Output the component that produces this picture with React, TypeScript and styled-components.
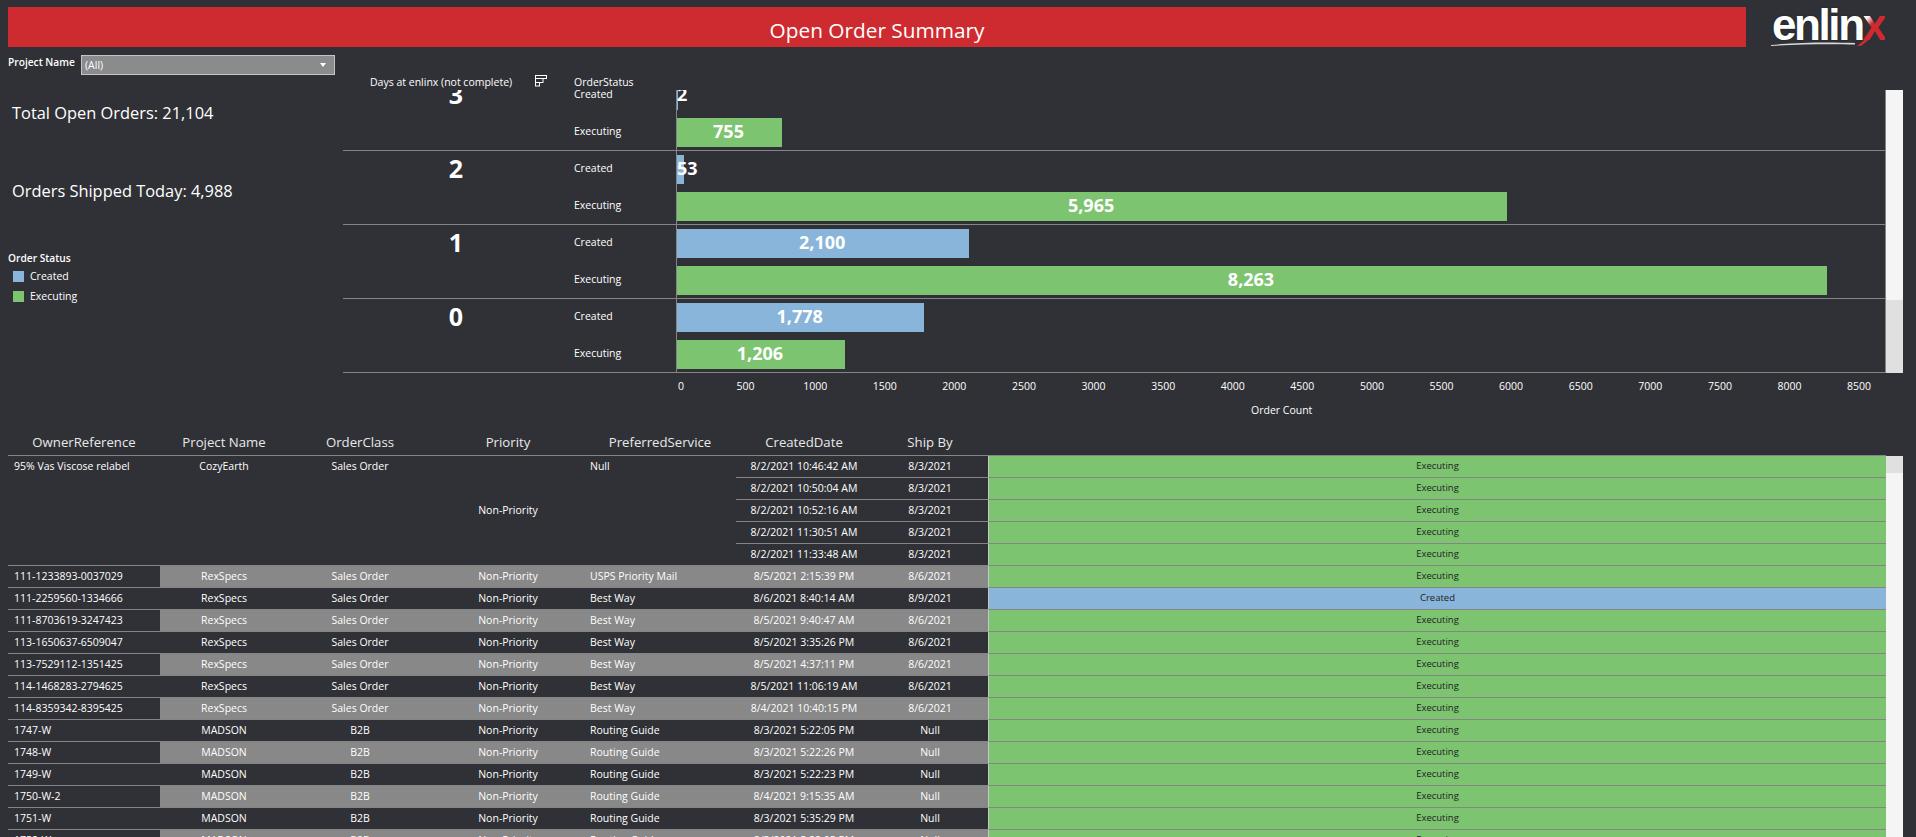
import styled, {createGlobalStyle} from "styled-components";

const GlobalStyle = createGlobalStyle`
  html, body {
    margin: 0;
    padding: 0;
    height: 837px;
    overflow: hidden;
    background: #303136;
  }
  * {
    box-sizing: border-box;
  }
  body {
    font-family: "Open Sans", "Noto Sans", sans-serif;
    color: #fff;
  }
`;

const GREEN = "#7dc470";
const BLUE = "#88b5d9";
const LINE = "#858585";
const PX_PER_ORDER = 1150 / 8263;

type OrderStatus = "Created" | "Executing";

const chartRows: {day: number; created: number; executing: number}[] = [
  {day: 3, created: 2, executing: 755},
  {day: 2, created: 53, executing: 5965},
  {day: 1, created: 2100, executing: 8263},
  {day: 0, created: 1778, executing: 1206},
];

const ticks = [0, 500, 1000, 1500, 2000, 2500, 3000, 3500, 4000, 4500, 5000, 5500, 6000, 6500, 7000, 7500, 8000, 8500];

const columns = ["OwnerReference", "Project Name", "OrderClass", "Priority", "PreferredService", "CreatedDate", "Ship By"];

const cozyDates = [
  ["8/2/2021 10:46:42 AM", "8/3/2021"],
  ["8/2/2021 10:50:04 AM", "8/3/2021"],
  ["8/2/2021 10:52:16 AM", "8/3/2021"],
  ["8/2/2021 11:30:51 AM", "8/3/2021"],
  ["8/2/2021 11:33:48 AM", "8/3/2021"],
];

const orders: {ref: string; project: string; orderClass: string; service: string; created: string; shipBy: string; status: OrderStatus}[] = [
  {ref: "111-1233893-0037029", project: "RexSpecs", orderClass: "Sales Order", service: "USPS Priority Mail", created: "8/5/2021 2:15:39 PM", shipBy: "8/6/2021", status: "Executing"},
  {ref: "111-2259560-1334666", project: "RexSpecs", orderClass: "Sales Order", service: "Best Way", created: "8/6/2021 8:40:14 AM", shipBy: "8/9/2021", status: "Created"},
  {ref: "111-8703619-3247423", project: "RexSpecs", orderClass: "Sales Order", service: "Best Way", created: "8/5/2021 9:40:47 AM", shipBy: "8/6/2021", status: "Executing"},
  {ref: "113-1650637-6509047", project: "RexSpecs", orderClass: "Sales Order", service: "Best Way", created: "8/5/2021 3:35:26 PM", shipBy: "8/6/2021", status: "Executing"},
  {ref: "113-7529112-1351425", project: "RexSpecs", orderClass: "Sales Order", service: "Best Way", created: "8/5/2021 4:37:11 PM", shipBy: "8/6/2021", status: "Executing"},
  {ref: "114-1468283-2794625", project: "RexSpecs", orderClass: "Sales Order", service: "Best Way", created: "8/5/2021 11:06:19 AM", shipBy: "8/6/2021", status: "Executing"},
  {ref: "114-8359342-8395425", project: "RexSpecs", orderClass: "Sales Order", service: "Best Way", created: "8/4/2021 10:40:15 PM", shipBy: "8/6/2021", status: "Executing"},
  {ref: "1747-W", project: "MADSON", orderClass: "B2B", service: "Routing Guide", created: "8/3/2021 5:22:05 PM", shipBy: "Null", status: "Executing"},
  {ref: "1748-W", project: "MADSON", orderClass: "B2B", service: "Routing Guide", created: "8/3/2021 5:22:26 PM", shipBy: "Null", status: "Executing"},
  {ref: "1749-W", project: "MADSON", orderClass: "B2B", service: "Routing Guide", created: "8/3/2021 5:22:23 PM", shipBy: "Null", status: "Executing"},
  {ref: "1750-W-2", project: "MADSON", orderClass: "B2B", service: "Routing Guide", created: "8/4/2021 9:15:35 AM", shipBy: "Null", status: "Executing"},
  {ref: "1751-W", project: "MADSON", orderClass: "B2B", service: "Routing Guide", created: "8/3/2021 5:35:29 PM", shipBy: "Null", status: "Executing"},
  {ref: "1752-W", project: "MADSON", orderClass: "B2B", service: "Routing Guide", created: "8/3/2021 5:22:05 PM", shipBy: "Null", status: "Executing"},
];

const Page = styled.div`
  width: 1916px;
  height: 837px;
  padding: 7px 0 0 8px;
  overflow: hidden;
`;

const Header = styled.header`
  display: flex;
  height: 40px;
`;

const TitleBar = styled.div`
  width: 1738px;
  background: #ce2b30;
  display: flex;
  align-items: center;
  justify-content: center;
  padding-top: 5px;
  font-size: 20.8px;
  line-height: 30px;
`;

const Logo = styled.div`
  position: relative;
  margin-left: 26px;
  width: 114px;
  height: 40px;
  margin-top: -1px;
  font-family: "Liberation Sans", sans-serif;
  font-weight: 700;
  font-size: 44px;
  line-height: 38px;
  letter-spacing: -2.4px;
  white-space: nowrap;
  text-shadow: 0 0 2px #00000066;
`;

const LogoX = styled.span`
  background: linear-gradient(135deg, #fff 0 30%, #cf2a30 46% 100%);
  -webkit-background-clip: text;
  background-clip: text;
  color: transparent;
  text-shadow: none;
`;

const Swoosh = styled.svg`
  position: absolute;
  left: -1px;
  top: 32px;
`;

const Middle = styled.div`
  display: grid;
  grid-template-columns: 335px 1fr;
  height: 384px;
`;

const Sidebar = styled.aside`
  display: flex;
  flex-direction: column;
  padding-top: 8px;
`;

const FilterRow = styled.div`
  display: flex;
  align-items: flex-start;
`;

const FilterLabel = styled.label`
  width: 73px;
  font-size: 10.2px;
  font-weight: 600;
  line-height: 14px;
`;

const Select = styled.div`
  width: 254px;
  height: 20px;
  background: #8a8b8d;
  border: 1px solid #c4c4c4;
  display: flex;
  align-items: center;
  justify-content: space-between;
  padding: 0 8px 0 3px;
  font-size: 10.5px;
`;

const Caret = styled.span`
  width: 0;
  height: 0;
  border-left: 3.5px solid transparent;
  border-right: 3.5px solid transparent;
  border-top: 4px solid #fff;
`;

const Kpi = styled.div<{$gap: number}>`
  margin: ${(p) => p.$gap}px 0 0 4px;
  font-size: 16.4px;
  line-height: 22px;
`;

const Legend = styled.div`
  margin-top: 49px;
`;

const LegendTitle = styled.div`
  font-size: 10.2px;
  font-weight: 600;
  line-height: 15px;
`;

const LegendItem = styled.div`
  display: flex;
  align-items: center;
  gap: 6px;
  height: 20px;
  padding-left: 5px;
  font-size: 10.5px;
`;

const Swatch = styled.span<{$color: string}>`
  width: 11px;
  height: 11px;
  background: ${(p) => p.$color};
`;

const ChartPanel = styled.section`
  display: flex;
  flex-direction: column;
  padding-top: 28px;
`;

const ChartHead = styled.div`
  display: grid;
  grid-template-columns: 27px 165px 39px 1fr;
  height: 15px;
  font-size: 10.5px;
  line-height: 14px;
`;

const HeadLabel = styled.div<{$col: number}>`
  grid-column: ${(p) => p.$col};
  white-space: nowrap;
`;

const ChartFrame = styled.div`
  display: flex;
  height: 283px;
`;

const Rows = styled.div`
  width: 1543px;
  overflow: hidden;
  border-right: 1px solid ${LINE};
`;

const Row = styled.div`
  display: grid;
  grid-template-columns: 231px 1fr;
  height: 74px;
  border-bottom: 1px solid ${LINE};
  &:first-child {
    margin-top: -13px;
  }
`;

const DayNumber = styled.div`
  padding-right: 5px;
  text-align: center;
  font-size: 25px;
  font-weight: 700;
  line-height: 35px;
`;

const SubRows = styled.div`
  display: flex;
  flex-direction: column;
`;

const SubRow = styled.div`
  display: grid;
  grid-template-columns: 102px 1fr;
  height: 37px;
  &:last-child {
    height: 36px;
  }
`;

const StatusLabel = styled.div`
  font-size: 10.5px;
  line-height: 35px;
`;

const BarTrack = styled.div`
  border-left: 1px solid ${LINE};
  padding-top: 4px;
`;

const Bar = styled.div<{$color: string; $tiny: boolean}>`
  height: 29px;
  background: ${(p) => p.$color};
  display: flex;
  align-items: center;
  justify-content: ${(p) => (p.$tiny ? "flex-start" : "center")};
  padding: 0 ${(p) => (p.$tiny ? "0" : "2px")} 3px 0;
  font-size: 18px;
  font-weight: 700;
  white-space: nowrap;
`;

const Scrollbar = styled.div`
  width: 17px;
  display: flex;
  flex-direction: column;
  background: #e0e0e0;
`;

const ChartThumb = styled.div`
  height: 210px;
  background: #f5f5f5;
`;

const AxisTicks = styled.div`
  display: flex;
  margin: 5px 0 0 298.2px;
`;

const Tick = styled.div<{$first: boolean}>`
  width: 69.6px;
  flex: none;
  padding-left: ${(p) => (p.$first ? "10px" : "0")};
  text-align: center;
  font-size: 10.5px;
  line-height: 16px;
`;

const AxisTitle = styled.div`
  margin: 9px 0 0 0;
  padding-left: 908px;
  font-size: 10.5px;
  line-height: 14px;
`;

const TableWrap = styled.section`
  display: flex;
  flex-direction: column;
`;

const TableHead = styled.div`
  display: grid;
  grid-template-columns: 152px 128px 144px 152px 152px 136px 116px 898px;
  height: 25px;
  border-bottom: 1px solid ${LINE};
  width: 1878px;
  font-size: 13.2px;
  line-height: 22px;
  color: #e9e9e9;
  text-align: center;
`;

const TableFrame = styled.div`
  display: flex;
`;

const TableBody = styled.div`
  display: grid;
  grid-template-columns: 152px 128px 144px 152px 152px 136px 116px 898px;
  grid-auto-rows: 22px;
  width: 1878px;
`;

const Cell = styled.div<{
  $gray?: boolean;
  $align?: "left" | "center";
  $span?: number;
  $middle?: boolean;
}>`
  grid-row: span ${(p) => p.$span ?? 1};
  display: flex;
  align-items: ${(p) => (p.$middle ? "center" : "flex-start")};
  justify-content: ${(p) => (p.$align === "left" ? "flex-start" : "center")};
  padding: ${(p) => (p.$middle ? "0 0 2px" : `2px ${p.$align === "left" ? "6px" : "0"} 0`)};
  background: ${(p) => (p.$gray ? "#888888" : "transparent")};
  border-bottom: 1px solid ${LINE};
  font-size: 10.5px;
  line-height: 16px;
  white-space: nowrap;
`;

const StatusCell = styled.div<{$status: OrderStatus}>`
  display: flex;
  align-items: flex-start;
  justify-content: center;
  padding-top: 2px;
  background: ${(p) => (p.$status === "Created" ? BLUE : GREEN)};
  border-bottom: 1px solid ${LINE};
  border-left: 1px solid #c6c6c6;
  color: #1f2226;
  font-size: 9.5px;
  line-height: 15px;
`;

const TableScrollbar = styled.div`
  width: 17px;
  height: 382px;
  display: flex;
  flex-direction: column;
  justify-content: flex-start;
  background: #f5f5f5;
`;

const ScrollButton = styled.div`
  height: 17px;
  background: #e0e0e0;
`;

const SortIcon = () => (
  <svg width="12" height="12" viewBox="0 0 12 12" fill="none" stroke="#fff" strokeWidth="1">
    <rect x="0.5" y="0.5" width="11" height="3" />
    <rect x="0.5" y="3.5" width="7.5" height="4" />
    <rect x="0.5" y="7.5" width="4" height="3.5" />
  </svg>
);

const StatusBar = ({value, color}: {value: number; color: string}) => (
  <Bar $color={color} $tiny={value < 100} style={{width: value * PX_PER_ORDER}}>
    {value.toLocaleString("en-US")}
  </Bar>
);

const CozyRow = ({index, created, shipBy}: {index: number; created: string; shipBy: string}) => (
  <>
    <Cell style={{gridColumn: 6, gridRow: index + 1}}>{created}</Cell>
    <Cell style={{gridColumn: 7, gridRow: index + 1}}>{shipBy}</Cell>
    <StatusCell $status="Executing" style={{gridColumn: 8, gridRow: index + 1}}>Executing</StatusCell>
  </>
);

const OrderRow = ({gray, order}: {gray: boolean; order: (typeof orders)[number]}) => (
  <>
    <Cell $align="left">{order.ref}</Cell>
    <Cell $gray={gray}>{order.project}</Cell>
    <Cell $gray={gray}>{order.orderClass}</Cell>
    <Cell $gray={gray}>Non-Priority</Cell>
    <Cell $gray={gray} $align="left">{order.service}</Cell>
    <Cell $gray={gray}>{order.created}</Cell>
    <Cell $gray={gray}>{order.shipBy}</Cell>
    <StatusCell $status={order.status}>{order.status}</StatusCell>
  </>
);

export default function App() {
  return (
    <>
      <GlobalStyle />
      <Page>
        <Header>
          <TitleBar>Open Order Summary</TitleBar>
          <Logo>
            enlin<LogoX>x</LogoX>
            <Swoosh width="116" height="10" viewBox="0 0 116 10">
              <path d="M0 7 C30 4 60 4 84 5 L84 6.5 C60 6 30 6 0 8 Z" fill="#d8d8d8" />
              <path d="M86 8 L90 8 L100 0 L96 0 Z" fill="#cf2a30" />
            </Swoosh>
          </Logo>
        </Header>

        <Middle>
          <Sidebar>
            <FilterRow>
              <FilterLabel>Project Name</FilterLabel>
              <Select>
                (All)
                <Caret />
              </Select>
            </FilterRow>
            <Kpi $gap={27}>Total Open Orders: 21,104</Kpi>
            <Kpi $gap={56}>Orders Shipped Today: 4,988</Kpi>
            <Legend>
              <LegendTitle>Order Status</LegendTitle>
              <LegendItem>
                <Swatch $color={BLUE} />
                Created
              </LegendItem>
              <LegendItem>
                <Swatch $color={GREEN} />
                Executing
              </LegendItem>
            </Legend>
          </Sidebar>

          <ChartPanel>
            <ChartHead>
              <HeadLabel $col={2}>Days at enlinx (not complete)</HeadLabel>
              <HeadLabel $col={3}>
                <SortIcon />
              </HeadLabel>
              <HeadLabel $col={4}>OrderStatus</HeadLabel>
            </ChartHead>
            <ChartFrame>
              <Rows>
                {chartRows.map((row) => (
                  <Row key={row.day}>
                    <DayNumber>{row.day}</DayNumber>
                    <SubRows>
                      <SubRow>
                        <StatusLabel>Created</StatusLabel>
                        <BarTrack>
                          <StatusBar value={row.created} color={BLUE} />
                        </BarTrack>
                      </SubRow>
                      <SubRow>
                        <StatusLabel>Executing</StatusLabel>
                        <BarTrack>
                          <StatusBar value={row.executing} color={GREEN} />
                        </BarTrack>
                      </SubRow>
                    </SubRows>
                  </Row>
                ))}
              </Rows>
              <Scrollbar>
                <ChartThumb />
              </Scrollbar>
            </ChartFrame>
            <AxisTicks>
              {ticks.map((tick) => (
                <Tick key={tick} $first={tick === 0}>
                  {tick}
                </Tick>
              ))}
            </AxisTicks>
            <AxisTitle>Order Count</AxisTitle>
          </ChartPanel>
        </Middle>

        <TableWrap>
          <TableHead>
            {columns.map((column) => (
              <div key={column}>{column}</div>
            ))}
          </TableHead>
          <TableFrame>
            <TableBody>
              <Cell $span={5} $align="left">95% Vas Viscose relabel</Cell>
              <Cell $span={5}>CozyEarth</Cell>
              <Cell $span={5}>Sales Order</Cell>
              <Cell $span={5} $middle>Non-Priority</Cell>
              <Cell $span={5} $align="left">Null</Cell>
              {cozyDates.map(([created, shipBy], i) => (
                <CozyRow key={created} index={i} created={created} shipBy={shipBy} />
              ))}
              {orders.map((order, i) => (
                <OrderRow key={order.ref} gray={i % 2 === 0} order={order} />
              ))}
            </TableBody>
            <TableScrollbar>
              <ScrollButton />
            </TableScrollbar>
          </TableFrame>
        </TableWrap>
      </Page>
    </>
  );
}
